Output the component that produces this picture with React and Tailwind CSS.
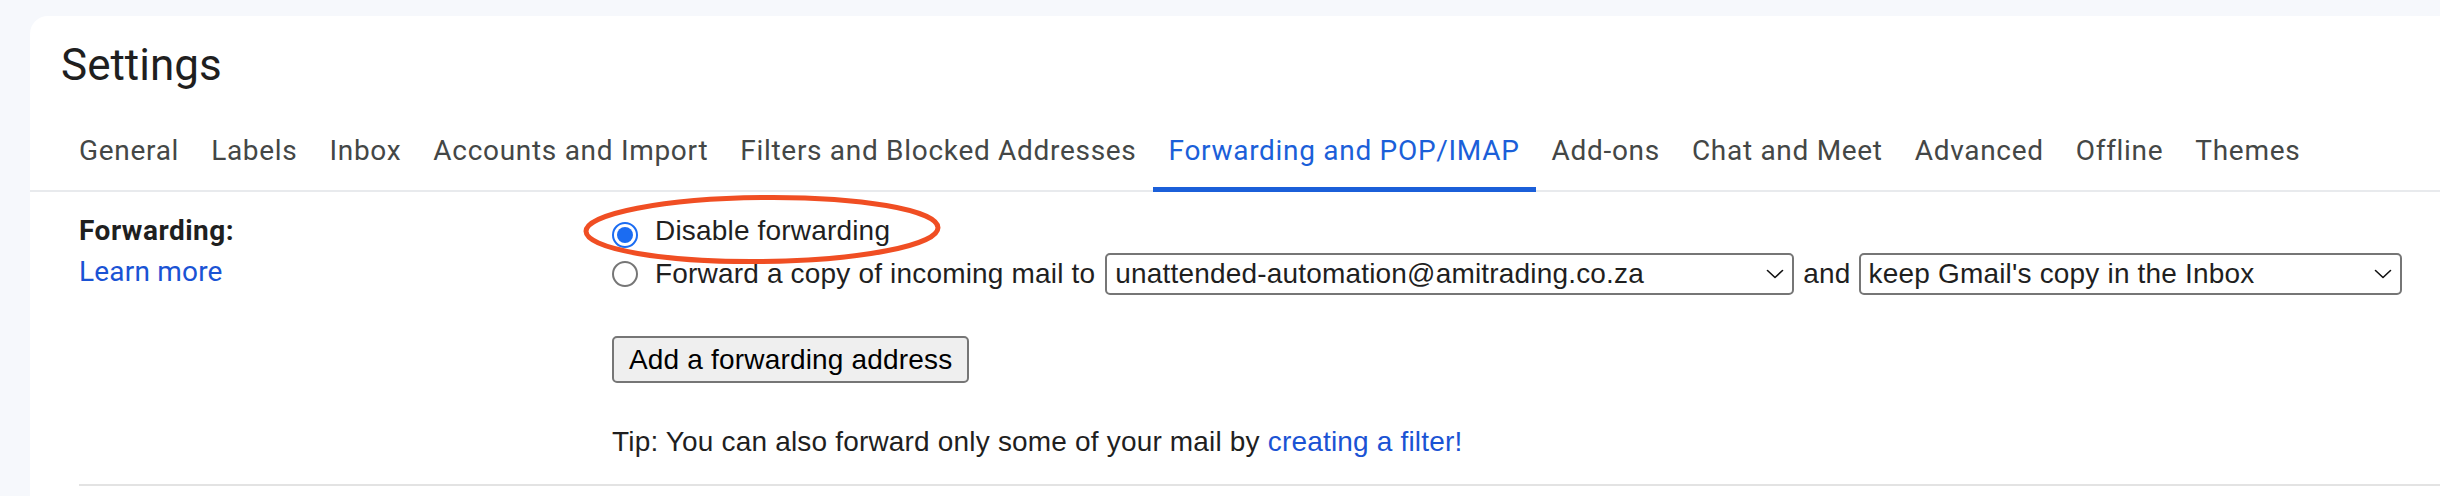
import React from "react";

const tabs = [
  "General",
  "Labels",
  "Inbox",
  "Accounts and Import",
  "Filters and Blocked Addresses",
  "Forwarding and POP/IMAP",
  "Add-ons",
  "Chat and Meet",
  "Advanced",
  "Offline",
  "Themes",
];

function Chevron() {
  return (
    <svg width="18" height="10" viewBox="0 0 18 10" fill="none">
      <path d="M1.5 1.5 L9 8.5 L16.5 1.5" stroke="#111" strokeWidth="1.6" strokeLinecap="round" strokeLinejoin="round" />
    </svg>
  );
}

function Select({ width, children }) {
  return (
    <div
      className={`flex items-center justify-between h-[42px] border-2 border-[#767676] rounded-[5px] pl-[8px] pr-[8px] bg-white ${width}`}
    >
      <span className="whitespace-nowrap">{children}</span>
      <Chevron />
    </div>
  );
}

export default function App() {
  return (
    <div className="relative w-[2440px] h-[496px] overflow-hidden bg-[#f6f8fc]">
      <div className="ml-[30px] mt-[16px] h-[480px] bg-white rounded-tl-[18px]">
        <div className="pt-[23px] pl-[31px] text-[44px] leading-[52px] text-[#1f1f1f] font-['Roboto',sans-serif]">
          Settings
        </div>

        <div className="flex pl-[33px] border-b-2 border-[#e8eaed] font-['Roboto',sans-serif]">
          {tabs.map((t) => {
            const active = t === "Forwarding and POP/IMAP";
            return (
              <div
                key={t}
                className={
                  active
                    ? "relative px-4 pt-[40px] pb-[19px] text-[28px] leading-[40px] tracking-[0.7px] whitespace-nowrap text-[#1b5fd9]"
                    : "relative px-4 pt-[40px] pb-[19px] text-[28px] leading-[40px] tracking-[0.7px] whitespace-nowrap text-[#444746]"
                }
              >
                {t}
                {active && (
                  <span className="absolute left-0 right-0 bottom-[-2px] h-[5px] bg-[#1b5fd9]" />
                )}
              </div>
            );
          })}
        </div>

        <div className="ml-[49px] grid grid-cols-[533px_1fr] pt-[23px] pb-[26px] border-b-2 border-[#e3e3e3]">
          <div className="font-['Roboto',sans-serif] text-[28px]">
            <div className="font-bold leading-[32px] tracking-[0.5px] text-[#1f1f1f]">Forwarding:</div>
            <div className="mt-[9px] leading-[32px] tracking-[0.2px] text-[#1a53d4]">Learn more</div>
          </div>

          <div className="font-['Liberation_Sans',Arial,sans-serif] text-[28px] tracking-[0.18px] text-[#1f1f1f]">
            <div className="flex items-start leading-[32px]">
              <span className="mt-[7px] mr-[17px] flex items-center justify-center w-[26px] h-[26px] rounded-full border-2 border-[#1b6cf2] bg-white">
                <span className="w-[16px] h-[16px] rounded-full bg-[#1b6cf2]" />
              </span>
              <span>Disable forwarding</span>
            </div>

            <div className="mt-[5px] flex items-center h-[42px] leading-[32px]">
              <span className="mr-[17px] w-[26px] h-[26px] rounded-full border-2 border-[#767676] bg-white" />
              <span className="whitespace-nowrap">Forward a copy of incoming mail to</span>
              <div className="ml-[10px]">
                <Select width="w-[689px]">unattended-automation@amitrading.co.za</Select>
              </div>
              <span className="ml-[9px] mr-[8px]">and</span>
              <Select width="w-[543px]">keep Gmail's copy in the Inbox</Select>
            </div>

            <div className="mt-[41px]">
              <div className="flex items-center w-[357px] h-[47px] pl-[15px] border-2 border-[#767676] rounded-[5px] bg-[#efefef] leading-[32px] text-black">
                Add a forwarding address
              </div>
            </div>

            <div className="mt-[43px] leading-[32px] whitespace-nowrap">
              Tip: You can also forward only some of your mail by{" "}
              <span className="text-[#1a53d4]">creating a filter!</span>
            </div>
          </div>
        </div>
      </div>

      <svg
        className="absolute left-[578px] top-[190px]"
        width="370"
        height="80"
        viewBox="0 0 370 80"
        fill="none"
      >
        <ellipse cx="184" cy="39.5" rx="176" ry="32" stroke="#f04e23" strokeWidth="5" transform="rotate(-0.6 184 39.5)" />
      </svg>
    </div>
  );
}
